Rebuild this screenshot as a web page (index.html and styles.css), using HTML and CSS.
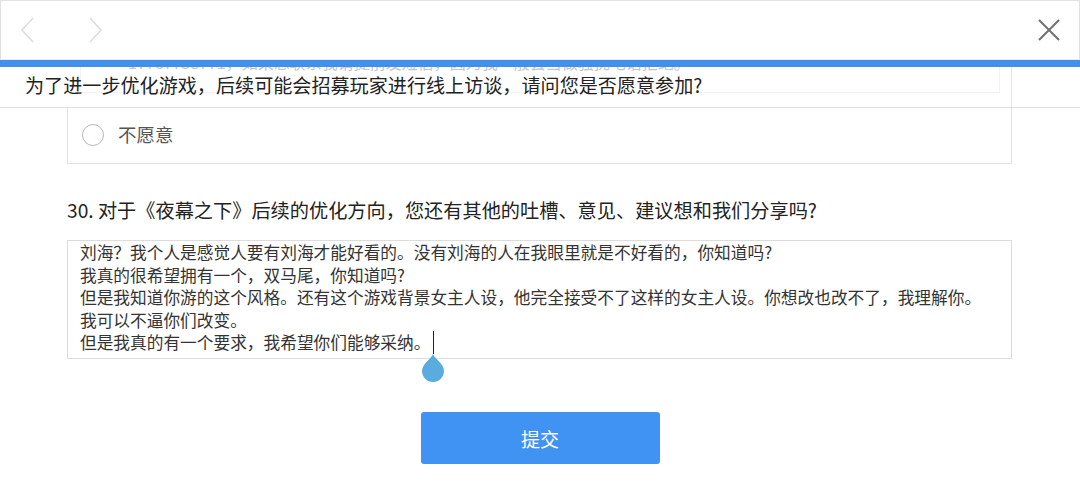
FILE: index.html
```html
<!DOCTYPE html>
<html lang="zh-CN">
<head>
<meta charset="utf-8">
<title>问卷</title>
<link rel="stylesheet" href="styles.css">
</head>
<body>
<header class="topbar">
  <div class="nav">
    <svg class="nav-icon" width="16" height="26" viewBox="0 0 16 26"><path d="M13 1 L2 13 L13 25" fill="none" stroke="#dcdcdc" stroke-width="1.6"/></svg>
    <svg class="nav-icon fwd" width="16" height="26" viewBox="0 0 16 26"><path d="M2 1 L13 13 L2 25" fill="none" stroke="#dcdcdc" stroke-width="1.6"/></svg>
  </div>
  <svg class="close" width="22" height="22" viewBox="0 0 22 22"><path d="M1 1 L21 21 M21 1 L1 21" fill="none" stroke="#707070" stroke-width="2"/></svg>
</header>
<div class="progress"></div>
<div class="sticky">
  <div class="ghost"><span class="dot">•</span>17767758771，如果想联系我请提前发短信，因为我一般会当做骚扰电话拒绝。</div>
  <div class="ghost-box"></div>
  <div class="ghost-edge"></div>
  <div class="sticky-title">为了进一步优化游戏，后续可能会招募玩家进行线上访谈，请问您是否愿意参加?</div>
</div>
<main class="content">
  <div class="option-box">
    <span class="radio"></span>
    <span class="opt-label">不愿意</span>
  </div>
  <h2 class="q-title">30. 对于《夜幕之下》后续的优化方向，您还有其他的吐槽、意见、建议想和我们分享吗?</h2>
  <div class="answer">
    <p>刘海？我个人是感觉人要有刘海才能好看的。没有刘海的人在我眼里就是不好看的，你知道吗?</p>
    <p>我真的很希望拥有一个，双马尾，你知道吗?</p>
    <p>但是我知道你游的这个风格。还有这个游戏背景女主人设，他完全接受不了这样的女主人设。你想改也改不了，我理解你。</p>
    <p>我可以不逼你们改变。</p>
    <p>但是我真的有一个要求，我希望你们能够采纳。<span class="caret"><svg class="handle" width="24" height="30" viewBox="0 0 24 30"><path d="M12 1 C14 6 23 11 23 18 A11 11 0 0 1 1 18 C1 11 10 6 12 1 Z" fill="#5aace0"/></svg></span></p>
  </div>
  <div class="actions">
    <button class="submit">提交</button>
  </div>
</main>
</body>
</html>
```
FILE: styles.css
```css
* { box-sizing: border-box; }
html, body { margin: 0; padding: 0; background: #fff; }
body {
  width: 1080px;
  height: 486px;
  overflow: hidden;
  font-family: "Noto Sans CJK SC", "Noto Sans", sans-serif;
  color: #333;
}
.topbar {
  height: 60px;
  border: 1px solid #e2e2e2;
  border-bottom: 1px solid #e6edf8;
  display: flex;
  align-items: center;
  justify-content: space-between;
  padding: 0 19px 0 18px;
  background: #fff;
}
.nav { display: flex; align-items: center; gap: 52px; padding-left: 1px; }
.nav-icon { display: block; }
.close { display: block; }
.progress { height: 7px; background: #4191ec; }
.sticky {
  position: relative;
  height: 41px;
  border-bottom: 1px solid #dedede;
  overflow: hidden;
  background: #fff;
}
.ghost {
  position: absolute;
  left: 104px;
  top: -14px;
  font-size: 16px;
  line-height: 18px;
  color: #c4c4c4;
  white-space: nowrap;
}
.ghost .dot { margin-right: 8px; }
.ghost-box {
  position: absolute;
  left: 80px;
  top: 0;
  width: 920px;
  height: 26px;
  border: 1px solid #f2f2f2;
  border-top: none;
}
.ghost-edge {
  position: absolute;
  left: 1011px;
  top: 0;
  width: 1px;
  height: 41px;
  background: #e6e6e6;
}
.sticky-title {
  position: relative;
  padding: 5px 0 0 25px;
  font-size: 19.1px;
  line-height: 26px;
  color: #222;
  white-space: nowrap;
}
.content { padding: 0 68px 0 67px; }
.option-box {
  height: 56px;
  border: 1px solid #e2e2e2;
  border-top: none;
  display: flex;
  align-items: center;
  padding: 0 0 4px 14px;
  gap: 14px;
}
.radio {
  width: 22px;
  height: 22px;
  border: 1.5px solid #b9b9b9;
  border-radius: 50%;
  display: block;
  margin-top: 2px;
}
.opt-label { font-size: 18.5px; color: #555; line-height: 24px; }
.q-title {
  margin: 33px 0 0;
  font-size: 19.2px;
  font-weight: normal;
  line-height: 26px;
  color: #222;
  white-space: nowrap;
}
.answer {
  margin-top: 17px;
  height: 119px;
  border: 1px solid #dcdcdc;
  padding: 0 12px 0;
  font-size: 16.7px;
  line-height: 22.5px;
  color: #333;
}
.answer p { margin: 0; white-space: nowrap; }
.caret {
  position: relative;
  display: inline-block;
  width: 1px;
  height: 23px;
  background: #222;
  vertical-align: -5px;
  margin-left: 3px;
}
.handle {
  position: absolute;
  left: -12px;
  top: 22px;
  display: block;
}
.actions { display: flex; justify-content: center; margin-top: 53px; }
.submit {
  width: 239px;
  height: 52px;
  border: none;
  border-radius: 3px;
  background: #4193f3;
  color: #fff;
  font-family: "Noto Sans CJK SC", "Noto Sans", sans-serif;
  font-size: 19px;
  margin-left: 1px;
}
```
